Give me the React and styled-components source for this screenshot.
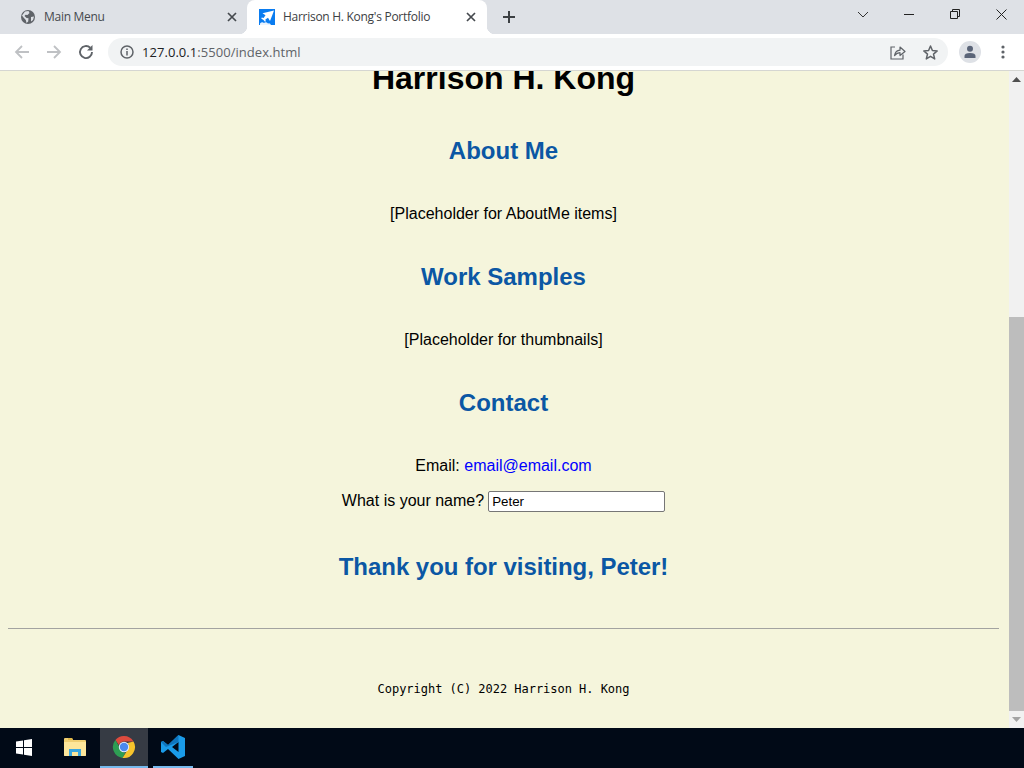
import React from "react";
import styled, { createGlobalStyle } from "styled-components";

const Global = createGlobalStyle`
  html, body { margin: 0; padding: 0; height: 100%; overflow: hidden; }
  #root { height: 100%; }
`;

const Screen = styled.div`
  width: 1024px; height: 768px; display: flex; flex-direction: column; overflow: hidden;
  font-family: "Liberation Sans", Arial, sans-serif;
`;
const TabBar = styled.div`
  height: 34px; flex: none; background: #dee1e6; display: flex; align-items: stretch;
`;
const Tab = styled.div`
  position: relative; width: ${p => p.$w}px; flex: none; display: flex; align-items: center;
  padding-left: ${p => p.$pad}px; padding-bottom: 1px; box-sizing: border-box; gap: ${p => p.$gap}px;
  font: 12px "Open Sans", sans-serif; letter-spacing: -0.28px; color: ${p => p.$active ? "#3c4043" : "#45494e"};
  ${p => p.$active && `
    background: #fff; border-radius: 8px 8px 0 0;
    &::before, &::after { content: ""; position: absolute; bottom: 0; width: 8px; height: 8px; }
    &::before { left: -8px; background: radial-gradient(circle at 0 0, transparent 8px, #fff 8.5px); }
    &::after { right: -8px; background: radial-gradient(circle at 100% 0, transparent 8px, #fff 8.5px); }
  `}
`;
const TabTitle = styled.span`flex: 1; white-space: nowrap;`;
const TabClose = styled.svg`width: 10px; height: 10px; margin-right: ${p => p.$mr}px; flex: none;`;
const NewTab = styled.svg`width: 14px; height: 14px; margin: 10px 0 0 15px; flex: none;`;
const WindowControls = styled.div`margin-left: auto; display: flex; align-items: flex-start;`;
const WinBtn = styled.div`
  width: 46px; height: 28px; display: flex; align-items: center; justify-content: center; color: #1a1a1a;
`;

const Toolbar = styled.div`
  height: 36px; flex: none; box-sizing: border-box; background: #fff; display: flex; align-items: center;
  padding-left: 13px;
`;
const NavIcon = styled.svg`width: 18px; height: 18px; flex: none; margin-right: ${p => p.$mr}px;`;
const Omnibox = styled.div`
  margin-left: 13px; width: 840px; height: 28px; border-radius: 14px; background: #f1f3f4; flex: none;
  display: flex; align-items: center; padding: 0 9px 0 11px; box-sizing: border-box;
`;
const UrlIcon = styled.svg`width: 16px; height: 16px; flex: none;`;
const Url = styled.span`
  margin-left: 7px; flex: 1; font: 13px "Open Sans", sans-serif; letter-spacing: 0.05px; color: #5f6368;
  b { font-weight: 400; color: #202124; }
`;
const OmniAction = styled.svg`width: 17px; height: 17px; flex: none; margin-left: ${p => p.$ml}px;`;
const Avatar = styled.div`
  margin-left: 11px; width: 22px; height: 22px; border-radius: 50%; background: #dee1e6; flex: none;
  display: flex; align-items: center; justify-content: center;
`;
const Dots = styled.svg`width: 4px; height: 14px; margin-left: 20px; flex: none;`;

const Divider = styled.div`height: 1px; flex: none; background: #d5d6d2;`;

const Viewport = styled.div`flex: 1; min-height: 0; display: flex;`;
const Page = styled.main`
  flex: 1; background: #f5f5dc; overflow: hidden; padding: 0 10px 0 8px; text-align: center; color: #000;
`;
const Title = styled.h1`
  font-size: 32px; line-height: 37px; font-weight: 700; margin: -11px 0 40px;
`;
const Heading = styled.h2`
  font-size: 24px; line-height: 28px; font-weight: 700; color: #0b57a4; margin: 0 0 40px;
`;
const Para = styled.p`
  font-size: 16px; line-height: 18px; margin: 0 0 ${p => p.$mb}px;
`;
const Mail = styled.a`color: #0000ff; text-decoration: none;`;
const NameRow = styled.div`
  display: flex; justify-content: center; align-items: flex-start; height: 21px; gap: 4px;
  font-size: 16px; line-height: 20px; margin-bottom: 41px;
`;
const NameInput = styled.input`
  width: 177px; height: 21px; box-sizing: border-box; border: 1px solid #767676; border-radius: 2px; background: #fff;
  padding: 1px 3px; font: 13.33px "Liberation Sans", Arial, sans-serif; color: #000; outline: none;
`;
const Thanks = styled(Heading)`margin-bottom: 47px; letter-spacing: -0.04px;`;
const Rule = styled.hr`
  margin: 0 0 52px; border: 0; border-top: 1px solid #a3a3a0; height: 0;
`;
const Copy = styled.div`
  font: 12px/16px "DejaVu Sans Mono", monospace; letter-spacing: -0.03px; color: #000;
`;

const Scrollbar = styled.div`
  width: 15px; flex: none; background: #f1f1f1; display: flex; flex-direction: column;
`;
const ScrollBtn = styled.div`
  height: 17px; flex: none; display: flex; align-items: center; justify-content: center;
`;
const ScrollTrack = styled.div`flex: 1; display: flex; flex-direction: column; min-height: 0;`;
const ScrollThumb = styled.div`margin-top: 229px; flex: 1; background: #bdbdbd;`;

const Taskbar = styled.footer`
  height: 40px; flex: none; background: #010a17; display: flex; align-items: stretch;
`;
const TaskItem = styled.div`
  width: ${p => p.$w}px; flex: none; display: flex; align-items: center; justify-content: center; box-sizing: border-box;
  margin-left: ${p => p.$ml || 0}px;
  padding-left: ${p => p.$pl || 0}px;
  background: ${p => p.$focus ? "#363b44" : "transparent"};
  border-bottom: 2px solid ${p => p.$open ? "#76b9ed" : "transparent"};
`;

const Globe = () => (
  <svg width="16" height="16" viewBox="0 0 16 16">
    <circle cx="8" cy="8" r="7" fill="#5f6368" />
    <path d="M5 2.6 L8.5 2 L9.5 4 L7.5 6 L5.5 5.8 L4.5 7 L6.5 9 L8.5 9.2 L8.2 12.5 L6.5 14 L5.8 11 L3.5 8.5 L2 6.5 Z" fill="#dee1e6" />
    <path d="M11 8 L14 7.5 L13 11 L11 12.5 Z" fill="#dee1e6" />
  </svg>
);
const PlaneFav = () => (
  <svg width="16" height="16" viewBox="0 0 16 16">
    <rect width="16" height="16" fill="#0a7cf0" />
    <path d="M1 16 V14.5 Q3 12.5 5 14 Q7 12.5 9 14.5 Q11 13.5 12 16 Z" fill="#eaf4ff" />
    <path d="M15 1.5 L3.5 4.2 L6.5 6.2 L4.6 9 L2.8 8.6 L2.2 9.4 L4.5 11 L6 12.8 L6.8 12.2 L6.4 10.6 L9 8.8 L11 12 Q13.4 6 15 1.5 Z" fill="#fff" />
  </svg>
);
const X = ({ mr }) => (
  <TabClose $mr={mr} viewBox="0 0 10 10">
    <path d="M1 1 L9 9 M9 1 L1 9" stroke="#45494e" strokeWidth="1.7" />
  </TabClose>
);

export default function App() {
  return (
    <Screen>
      <Global />
      <TabBar>
        <Tab $w={247} $pad={20} $gap={8}>
          <Globe />
          <TabTitle>Main Menu</TabTitle>
          <X mr={10} />
        </Tab>
        <Tab $active $w={240} $pad={12} $gap={8}>
          <PlaneFav />
          <TabTitle>Harrison H. Kong's Portfolio</TabTitle>
          <X mr={11} />
        </Tab>
        <NewTab viewBox="0 0 14 14">
          <path d="M7 1 V13 M1 7 H13" stroke="#3c4043" strokeWidth="2" />
        </NewTab>
        <WindowControls>
          <WinBtn>
            <svg width="12" height="7" viewBox="0 0 12 7"><path d="M1 1 L6 6 L11 1" fill="none" stroke="#333" strokeWidth="1" /></svg>
          </WinBtn>
          <WinBtn>
            <svg width="10" height="1" viewBox="0 0 10 1"><rect width="10" height="1" fill="#222" /></svg>
          </WinBtn>
          <WinBtn>
            <svg width="10" height="10" viewBox="0 0 10 10"><path d="M.5 2.5 H7.5 V9.5 H.5 Z M2.5 2.5 V.5 H9.5 V7.5 H7.5" fill="none" stroke="#222" strokeWidth="1" /></svg>
          </WinBtn>
          <WinBtn>
            <svg width="11" height="11" viewBox="0 0 11 11"><path d="M.5 .5 L10.5 10.5 M10.5 .5 L.5 10.5" stroke="#222" strokeWidth="1" /></svg>
          </WinBtn>
        </WindowControls>
      </TabBar>

      <Toolbar>
        <NavIcon $mr={14} viewBox="0 0 18 18">
          <path d="M16 9 H3 M9 3 L3 9 L9 15" fill="none" stroke="#bfc1c4" strokeWidth="1.8" />
        </NavIcon>
        <NavIcon $mr={14} viewBox="0 0 18 18">
          <path d="M2 9 H15 M9 3 L15 9 L9 15" fill="none" stroke="#bfc1c4" strokeWidth="1.8" />
        </NavIcon>
        <NavIcon $mr={0} viewBox="0 0 18 18">
          <path d="M15 9 A6 6 0 1 1 13.2 4.8" fill="none" stroke="#5f6368" strokeWidth="1.9" />
          <path d="M15.5 2 V7.5 H10 Z" fill="#5f6368" />
        </NavIcon>
        <Omnibox>
          <UrlIcon viewBox="0 0 16 16">
            <circle cx="8" cy="8" r="6" fill="none" stroke="#5f6368" strokeWidth="1.5" />
            <path d="M8 7 V11.5 M8 4.5 V6" stroke="#5f6368" strokeWidth="1.5" />
          </UrlIcon>
          <Url><b>127.0.0.1</b>:5500/index.html</Url>
          <OmniAction $ml={0} viewBox="0 0 17 17">
            <path d="M6 3 H2 V15 H14 V10.5" fill="none" stroke="#5f6368" strokeWidth="1.2" />
            <path d="M5.5 11.5 Q6.5 6.5 11 6.2 V3 L16 7.5 L11 11.5 V8.7 Q8 8.7 5.5 11.5 Z" fill="none" stroke="#5f6368" strokeWidth="1.2" strokeLinejoin="round" />
          </OmniAction>
          <OmniAction $ml={16} viewBox="0 0 17 17">
            <path d="M8.5 2 L10.4 6.5 L15.2 6.9 L11.5 10.1 L12.7 14.9 L8.5 12.3 L4.3 14.9 L5.5 10.1 L1.8 6.9 L6.6 6.5 Z" fill="none" stroke="#5f6368" strokeWidth="1.5" strokeLinejoin="round" />
          </OmniAction>
        </Omnibox>
        <Avatar>
          <svg width="14" height="14" viewBox="0 0 14 14">
            <circle cx="7" cy="3.7" r="3" fill="#5a6478" />
            <path d="M1.5 13 V11 Q1.5 8 7 8 Q12.5 8 12.5 11 V13 Z" fill="#5a6478" />
          </svg>
        </Avatar>
        <Dots viewBox="0 0 4 14">
          <circle cx="2" cy="2" r="1.6" fill="#5f6368" />
          <circle cx="2" cy="7" r="1.6" fill="#5f6368" />
          <circle cx="2" cy="12" r="1.6" fill="#5f6368" />
        </Dots>
      </Toolbar>
      <Divider />

      <Viewport>
        <Page>
          <Title>Harrison H. Kong</Title>
          <Heading>About Me</Heading>
          <Para $mb={40}>[Placeholder for AboutMe items]</Para>
          <Heading>Work Samples</Heading>
          <Para $mb={40}>[Placeholder for thumbnails]</Para>
          <Heading>Contact</Heading>
          <Para $mb={16}>Email: <Mail href="#">email@email.com</Mail></Para>
          <NameRow>
            <span>What is your name?</span>
            <NameInput defaultValue="Peter" />
          </NameRow>
          <Thanks>Thank you for visiting, Peter!</Thanks>
          <Rule />
          <Copy>Copyright (C) 2022 Harrison H. Kong</Copy>
        </Page>
        <Scrollbar>
          <ScrollBtn>
            <svg width="9" height="5" viewBox="0 0 9 5"><path d="M4.5 0 L9 5 H0 Z" fill="#505050" /></svg>
          </ScrollBtn>
          <ScrollTrack><ScrollThumb /></ScrollTrack>
          <ScrollBtn>
            <svg width="9" height="5" viewBox="0 0 9 5"><path d="M0 0 H9 L4.5 5 Z" fill="#a3a3a3" /></svg>
          </ScrollBtn>
        </Scrollbar>
      </Viewport>

      <Taskbar>
        <TaskItem $w={48}>
          <svg width="17" height="17" viewBox="0 0 17 17">
            <path d="M0 2.5 L7 1.5 V8 H0 Z M8 1.3 L16 0 V8 H8 Z M0 9 H7 V15.5 L0 14.5 Z M8 9 H16 V17 L8 15.7 Z" fill="#fff" />
          </svg>
        </TaskItem>
        <TaskItem $w={52} $pl={2}>
          <svg width="22" height="20" viewBox="0 0 22 20">
            <path d="M0 2 Q0 1 1 1 H8 L9 3 H21 Q22 3 22 4 V18 Q22 19 21 19 H1 Q0 19 0 18 Z" fill="#f0cf72" />
            <path d="M0 5 H22 V18 Q22 19 21 19 H1 Q0 19 0 18 Z" fill="#fde69a" />
            <path d="M4 1 H8 L9 3 H4 Z" fill="#e0b848" />
            <path d="M5 12 H17 V19 H14 V15 H8 V19 H5 Z" fill="#3aa7e0" />
          </svg>
        </TaskItem>
        <TaskItem $w={48} $focus $open>
          <svg width="24" height="24" viewBox="0 0 24 24">
            <path d="M12 1 A11 11 0 0 1 21.5 6.5 H12 A5.5 5.5 0 0 0 6.9 10 L3.4 5 A11 11 0 0 1 12 1 Z" fill="#dd4b3e" />
            <path d="M3.4 5 L7.8 12.8 A5 5 0 0 0 13.5 17.5 L10.5 22.9 A11 11 0 0 1 3.4 5 Z" fill="#2e9d53" />
            <path d="M21.5 6.5 A11 11 0 0 1 10.5 22.9 L15.8 14.6 A5 5 0 0 0 15.5 8 Z" fill="#f6c32c" />
            <circle cx="12" cy="12" r="5.2" fill="#e8eefc" />
            <circle cx="12" cy="12" r="4.2" fill="#4a89f0" />
          </svg>
        </TaskItem>
        <TaskItem $w={40} $ml={5} $open>
          <svg width="26" height="26" viewBox="0 0 26 26">
            <path d="M18.5 1 L25 4 V22 L18.5 25 L8 15 L3 19 L1 18 V8 L3 7 L8 11 Z M18.5 8 L12 13 L18.5 18 Z" fill="#1a9be8" fillRule="evenodd" />
            <path d="M18.5 1 L8 11 L3 7 L1 8 L6 13 L18.5 8 Z" fill="#0f75bd" />
          </svg>
        </TaskItem>
      </Taskbar>
    </Screen>
  );
}
